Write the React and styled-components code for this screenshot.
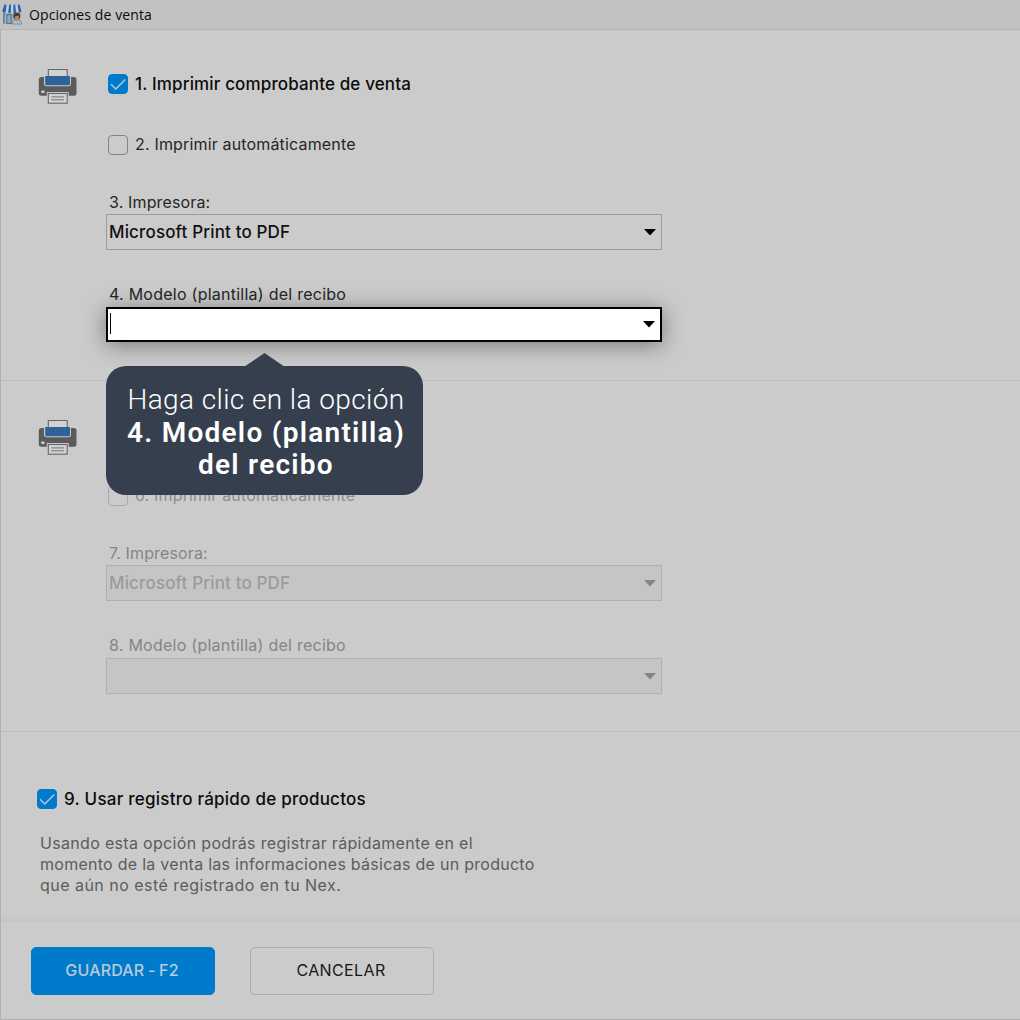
import React from "react";
import styled, { createGlobalStyle, css } from "styled-components";

const Global = createGlobalStyle`
  * { box-sizing: border-box; }
  html, body { margin: 0; padding: 0; background: #cbcbcb; }
  body { font-family: Inter, "Liberation Sans", sans-serif; color: #111; }
`;

const Window = styled.div`
  width: 1020px;
  height: 1020px;
  overflow: hidden;
  display: flex;
  flex-direction: column;
  background: #cbcbcb;
`;

const TitleBar = styled.header`
  height: 30px;
  flex: none;
  display: flex;
  align-items: center;
  gap: 7px;
  padding: 0 0 1px 2px;
  background: #c2c2c2;
  border-bottom: 1px solid #b5b5b5;
  color: #0a0a0a;
  font-family: "Open Sans", "Noto Sans", sans-serif;
  font-size: 14px;
  letter-spacing: 0.1px;
  svg { flex: none; }
`;

const Body = styled.main`
  flex: 1;
  display: flex;
  flex-direction: column;
  border-left: 1px solid #b0b0b0;
  border-bottom: 1px solid #adadad;
`;

const Section = styled.section`
  height: 351px;
  flex: none;
  display: flex;
  padding: ${(p) => (p.$second ? 95 : 34)}px 0 0 37px;
  border-bottom: 1px solid #bebebe;
`;

const IconSlot = styled.div`
  width: 68px;
  flex: none;
  margin-top: ${(p) => (p.$second ? -57 : 4)}px;
`;

const Fields = styled.div`
  width: 556px;
  display: flex;
  flex-direction: column;
`;

const CheckRow = styled.label`
  display: flex;
  align-items: center;
  gap: 6px;
  height: 40px;
  padding-left: ${(p) => (p.$flush ? 0.4 : 2.4)}px;
  margin-bottom: ${(p) => (p.$spaced ? 21 : 0)}px;
  white-space: nowrap;
  font-size: ${(p) => (p.$strong ? 17 : 16)}px;
  font-weight: ${(p) => (p.$strong ? 500 : 400)};
  letter-spacing: ${(p) => (p.$flush ? 0.24 : p.$strong ? 0.14 : 0.16)}px;
  color: ${(p) => (p.$disabled ? "#8e8e8e" : p.$strong ? "#0c0c0c" : "#262626")};
`;

const OptionText = styled.span`
  padding-left: 0.7px;
  padding-bottom: ${(p) => (p.$raised ? 2 : 0)}px;
`;

const Box = styled.span`
  width: 20px;
  height: 20px;
  flex: none;
  display: grid;
  place-items: center;
  border-radius: 4px;
  border: 1px solid ${(p) => (p.$checked ? "#007acb" : p.$disabled ? "#a9a9a9" : "#858585")};
  background: ${(p) => (p.$checked ? "#007acb" : "transparent")};
`;

const FieldLabel = styled.div`
  height: 22px;
  line-height: ${(p) => (p.$top > 30 ? 18.5 : 20)}px;
  margin-top: ${(p) => p.$top}px;
  padding-left: 3px;
  font-size: 16px;
  letter-spacing: ${(p) => (p.$top > 30 ? 0.25 : 0.14)}px;
  color: ${(p) => (p.$disabled ? "#858585" : "#262626")};
`;

const Combo = styled.div`
  position: relative;
  height: 36px;
  display: flex;
  align-items: center;
  justify-content: space-between;
  padding: 0 5px 0 2px;
  border: 1px solid #9b9b9b;
  font-size: 17px;
  font-weight: 500;
  letter-spacing: 0.15px;
  color: #111;
  ${(p) => p.$disabled && css`
    background: #c5c5c5;
    border-color: #b0b0b0;
    color: #9b9b9b;
  `}
  ${(p) => p.$active && css`
    height: 35px;
    background: #fff;
    border: 2px solid #000;
    padding: 0 5px 0 2px;
    box-shadow: 0 3px 22px rgba(0, 0, 0, 0.42);
  `}
`;

const Caret = styled.span`
  width: 1px;
  height: 21px;
  background: #000;
  margin-top: -2px;
`;

const Bubble = styled.div`
  position: absolute;
  z-index: 2;
  left: -2px;
  top: 57px;
  width: 317px;
  height: 129px;
  padding: 18px 0 0 3px;
  border-radius: 20px;
  background: #363f4e;
  color: #fff;
  text-align: center;
  white-space: nowrap;
  font-family: Roboto, "Liberation Sans", sans-serif;
  font-size: 28px;
  font-weight: 300;
  line-height: 32.5px;
  letter-spacing: 0.4px;
  &::before {
    content: "";
    position: absolute;
    left: 138px;
    top: -13px;
    width: 41px;
    height: 14px;
    background: #363f4e;
    clip-path: polygon(50% 0, 100% 100%, 0 100%);
  }
  b { font-weight: 600; letter-spacing: 1.25px; }
  div { height: 32.5px; }
`;

const Extra = styled.section`
  flex: 1;
  padding: 47px 0 0 36px;
  background: linear-gradient(to top, #c3c3c3 0, #cbcbcb 7px);
`;

const Note = styled.p`
  display: flex;
  flex-direction: column;
  margin: 14px 0 0 3px;
  font-size: 16px;
  line-height: 21.2px;
  color: #5c5c5c;
  white-space: nowrap;
`;

const NoteLine = styled.span`
  letter-spacing: ${(p) => p.$tracking}px;
`;

const Footer = styled.footer`
  height: 97px;
  flex: none;
  display: flex;
  gap: 35px;
  padding: 25px 0 0 30px;
  background: #cbcbcb;
`;

const Button = styled.button`
  width: 184px;
  height: 48px;
  padding: 0 2px 2px 0;
  border-radius: 5px;
  border: 1px solid ${(p) => (p.$primary ? "#007acb" : "#adadad")};
  background: ${(p) => (p.$primary ? "#007acb" : "transparent")};
  color: ${(p) => (p.$primary ? "#b9cbd8" : "#181818")};
  font: ${(p) => (p.$primary ? 500 : 400)} 16px Inter, sans-serif;
  letter-spacing: ${(p) => (p.$primary ? 0.15 : 0.38)}px;
  word-spacing: ${(p) => (p.$primary ? -0.8 : 0)}px;
`;

const Check = () => (
  <svg width="18" height="18" viewBox="0 0 18 18" fill="none">
    <path d="M2 9.2 L6.8 14 L16.3 4.4" stroke="#b4cddd" strokeWidth="1.4" />
  </svg>
);

const Arrow = ({ color = "#000" }) => (
  <svg width="12" height="7" viewBox="0 0 12 7">
    <path d="M0 0 H12 L6 6.4 Z" fill={color} />
  </svg>
);

const Printer = () => (
  <svg width="40" height="37" viewBox="0 0 40 37">
    <path d="M3 9 H36 Q38.5 9 38.5 11.5 V25 Q38.5 27.7 36 27.7 H3.5 Q0.8 27.7 0.8 25 V11.5 Q0.8 9 3 9 Z" fill="#5b5b5b" />
    <path d="M6 7 H33 V15.5 Q33 18.3 30.5 18.3 H8.5 Q6 18.3 6 15.5 Z" fill="#cbcbcb" />
    <path d="M10.3 9 V1.5 H29.2 V9" fill="#d2d2d2" stroke="#686868" strokeWidth="1.1" />
    <path d="M7.2 7.9 H32 V15.9 Q32 17.2 30.5 17.2 H8.7 Q7.2 17.2 7.2 15.9 Z" fill="#30629a" />
    <rect x="3.2" y="22.5" width="3.4" height="2.6" rx="0.8" fill="#cbcbcb" />
    <path d="M8.8 28 V24 H30.7 V28 Z" fill="#cbcbcb" />
    <rect x="10.3" y="25.5" width="18.9" height="9.7" fill="#d2d2d2" stroke="#686868" strokeWidth="1.1" />
    <path d="M13.3 28.9 H26 M13.3 31.8 H26" stroke="#777" strokeWidth="1" />
  </svg>
);

const Shop = () => (
  <svg width="20" height="21" viewBox="0 0 20 21">
    <rect x="1" y="8" width="17.6" height="11.6" fill="#a9b2ba" />
    <rect x="1" y="9" width="1.8" height="10.6" fill="#6d8296" />
    <rect x="4.8" y="10.6" width="4.4" height="9" fill="#7fabc4" stroke="#4b7087" strokeWidth="1" />
    <path d="M2.4 0.5 H17.6 L19.4 7 Q19.2 8.8 17.6 8.8 H2 Q0.5 8.8 0.3 7 Z" fill="#c6ccd6" />
    <path d="M2.4 0.5 H4.6 L3.6 8.4 Q1 9.4 0.3 7 Z M7.2 0.5 H9 L8.8 8.4 Q7.4 9.4 6.2 8.4 Z M11.4 0.5 H13.2 L14 8.4 Q12.6 9.4 11.4 8.4 Z M15.6 0.5 H17.6 L19.4 7 Q18.8 9.4 16.8 8.4 Z" fill="#2c61b0" />
    <path d="M10.2 20 Q10.2 16 15 16 Q19.8 16 19.8 20 Z" fill="#b4c2cd" stroke="#6b7f90" strokeWidth="0.8" />
    <circle cx="14.8" cy="12" r="3.5" fill="#4a382b" />
    <path d="M12.8 12.6 Q14.6 12 16.6 11.6 L17 13.6 Q16.3 16 14.9 16 Q13.2 16 12.8 13.8 Z M14 15.5 H15.8 L14.9 18 Z" fill="#bd8a66" />
  </svg>
);

const CheckOption = ({ checked, children, ...rest }) => (
  <CheckRow {...rest}>
    <Box $checked={checked} $disabled={rest.$disabled}>{checked && <Check />}</Box>
    <OptionText $raised={!rest.$strong}>{children}</OptionText>
  </CheckRow>
);

export default function App() {
  return (
    <Window>
      <Global />
      <TitleBar><Shop /><span>Opciones de venta</span></TitleBar>
      <Body>
        <Section>
          <IconSlot><Printer /></IconSlot>
          <Fields>
            <CheckOption checked $strong $spaced>1. Imprimir comprobante de venta</CheckOption>
            <CheckOption>2. Imprimir automáticamente</CheckOption>
            <FieldLabel $top={27}>3. Impresora:</FieldLabel>
            <Combo><span>Microsoft Print to PDF</span><Arrow /></Combo>
            <FieldLabel $top={35}>4. Modelo (plantilla) del recibo</FieldLabel>
            <Combo $active>
              <Caret />
              <Arrow />
              <Bubble>
                <div>Haga clic en la opción</div>
                <div><b>4. Modelo (plantilla)</b></div>
                <div><b>del recibo</b></div>
              </Bubble>
            </Combo>
          </Fields>
        </Section>
        <Section $second>
          <IconSlot $second><Printer /></IconSlot>
          <Fields>
            <CheckOption $disabled>6. Imprimir automáticamente</CheckOption>
            <FieldLabel $disabled $top={27}>7. Impresora:</FieldLabel>
            <Combo $disabled><span>Microsoft Print to PDF</span><Arrow color="#858585" /></Combo>
            <FieldLabel $disabled $top={35}>8. Modelo (plantilla) del recibo</FieldLabel>
            <Combo $disabled><span /><Arrow color="#858585" /></Combo>
          </Fields>
        </Section>
        <Extra>
          <CheckOption checked $strong $flush>9. Usar registro rápido de productos</CheckOption>
          <Note>
            <NoteLine $tracking={0.32}>Usando esta opción podrás registrar rápidamente en el</NoteLine>
            <NoteLine $tracking={0.27}>momento de la venta las informaciones básicas de un producto</NoteLine>
            <NoteLine $tracking={0.47}>que aún no esté registrado en tu Nex.</NoteLine>
          </Note>
        </Extra>
        <Footer>
          <Button $primary>GUARDAR - F2</Button>
          <Button>CANCELAR</Button>
        </Footer>
      </Body>
    </Window>
  );
}
